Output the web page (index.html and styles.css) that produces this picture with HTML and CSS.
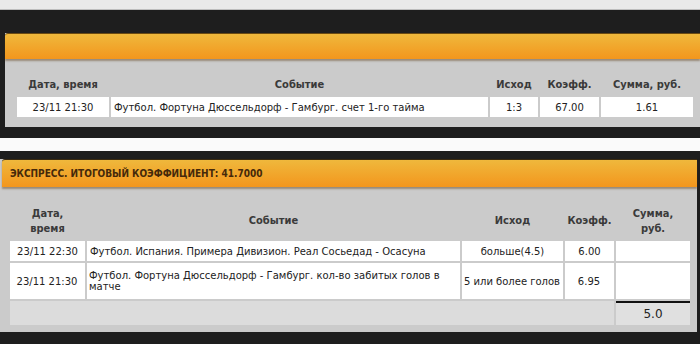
FILE: index.html
```html
<!DOCTYPE html>
<html lang="ru">
<head>
  <meta charset="UTF-8">
  <title>История ставок</title>
  <link rel="stylesheet" href="styles.css">
</head>
<body>

<div class="topbar"></div>

<div class="band band-first">
  <div class="panel panel-single">
    <div class="panel-head"></div>
    <div class="panel-body">
      <table class="bets">
        <thead>
          <tr>
            <th class="c-date">Дата, время</th>
            <th class="c-event">Событие</th>
            <th class="c-out">Исход</th>
            <th class="c-coef">Коэфф.</th>
            <th class="c-sum">Сумма, руб.</th>
          </tr>
        </thead>
        <tbody>
          <tr>
            <td class="c-date">23/11 21:30</td>
            <td class="c-event">Футбол. Фортуна Дюссельдорф - Гамбург. счет 1-го тайма</td>
            <td class="c-out">1:3</td>
            <td class="c-coef">67.00</td>
            <td class="c-sum">1.61</td>
          </tr>
        </tbody>
      </table>
    </div>
  </div>
</div>

<div class="gap"></div>

<div class="band band-second">
  <div class="panel panel-express">
    <div class="panel-head">ЭКСПРЕСС. ИТОГОВЫЙ КОЭФФИЦИЕНТ: 41.7000</div>
    <div class="panel-body">
      <table class="bets">
        <thead>
          <tr>
            <th class="c-date">Дата,<br>время</th>
            <th class="c-event">Событие</th>
            <th class="c-out">Исход</th>
            <th class="c-coef">Коэфф.</th>
            <th class="c-sum">Сумма,<br>руб.</th>
          </tr>
        </thead>
        <tbody>
          <tr>
            <td class="c-date">23/11 22:30</td>
            <td class="c-event">Футбол. Испания. Примера Дивизион. Реал Сосьедад - Осасуна</td>
            <td class="c-out">больше(4.5)</td>
            <td class="c-coef">6.00</td>
            <td class="c-sum"></td>
          </tr>
          <tr class="tall">
            <td class="c-date">23/11 21:30</td>
            <td class="c-event">Футбол. Фортуна Дюссельдорф - Гамбург. кол-во забитых голов в матче</td>
            <td class="c-out">5 или более голов</td>
            <td class="c-coef">6.95</td>
            <td class="c-sum"></td>
          </tr>
        </tbody>
        <tfoot>
          <tr>
            <td class="total-fill" colspan="4"></td>
            <td class="total">5.0</td>
          </tr>
        </tfoot>
      </table>
    </div>
  </div>
</div>

</body>
</html>
```

FILE: styles.css
```css
* { box-sizing: border-box; }
body {
  margin: 0;
  width: 700px;
  height: 344px;
  overflow: hidden;
  background: #1e1e1e;
  font-family: "DejaVu Sans", Tahoma, sans-serif;
  font-size: 10px;
  color: #222;
}
.topbar {
  height: 10px;
  background: #e9e9e9;
  border-bottom: 1px solid #bdbdbd;
}
.band {
  background: #1e1e1e;
}
.band-first {
  padding: 23px 0 11px 5px;
}
.band-second {
  padding: 8px 0 11px 0;
}
.gap {
  height: 13px;
  background: #fafafa;
}

/* panel: orange heading + grey body */
.panel {
  background: #cbcbcb;
}
.panel-head {
  height: 26px;
  border-top: 1px solid #6b4a12;
  border-radius: 3px 0 0 0;
  background: linear-gradient(#efb83c, #f3961d);
  box-shadow: 0 2px 2px rgba(90, 60, 20, 0.45);
  position: relative;
  font-family: "DejaVu Sans Condensed", "DejaVu Sans", sans-serif;
  font-weight: bold;
  font-size: 10px;
  line-height: 27px;
  color: #45290a;
  padding-left: 8px;
}
.panel-express {
  margin-right: 3px;
}
.panel-express .panel-head {
  height: 28px;
  margin-left: 2px;
  border-top-color: #3a2a10;
}
.panel-single .panel-body {
  height: 68px;
  padding: 17px 5px 0 10px;
}
.panel-express .panel-body {
  height: 145px;
  padding: 2px 5px 0 8px;
}

/* bets table */
.bets {
  width: 100%;
  border-collapse: separate;
  border-spacing: 2px;
}
.bets th {
  font-family: "DejaVu Sans Condensed", "DejaVu Sans", sans-serif;
  font-weight: bold;
  font-size: 11px;
  color: #3a3a3a;
  text-align: center;
  padding: 0 1px 4px;
}
.bets td {
  background: #fff;
  height: 20px;
  padding: 0 3px;
  text-align: center;
  white-space: nowrap;
}
.bets td.c-event {
  text-align: left;
  white-space: normal;
}
.panel-single .c-date { width: 92px; }
.panel-single .c-out { width: 48px; }
.panel-single .c-coef { width: 59px; }
.panel-single .c-sum { width: 92px; }

.panel-express th {
  height: 48px;
  line-height: 15px;
  vertical-align: middle;
  padding: 11px 1px 0;
}
.panel-express .c-date { width: 75px; }
.panel-express .c-out { width: 101px; }
.panel-express .c-coef { width: 49px; }
.panel-express .c-sum { width: 74px; }
.panel-express tr.tall td {
  height: 36px;
  padding-left: 2px;
}
.panel-express td.total-fill {
  background: #dcdcdc;
  height: 24px;
}
.panel-express td.total {
  background: #e0e0e0;
  border-top: 2px solid #111;
  font-size: 12px;
}
```
